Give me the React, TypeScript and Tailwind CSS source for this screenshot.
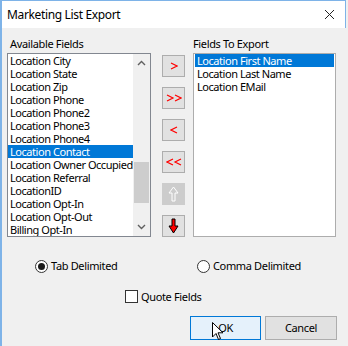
import React from "react";

const available = [
  "Location City",
  "Location State",
  "Location Zip",
  "Location Phone",
  "Location Phone2",
  "Location Phone3",
  "Location Phone4",
  "Location Contact",
  "Location Owner Occupied",
  "Location Referral",
  "LocationID",
  "Location Opt-In",
  "Location Opt-Out",
  "Billing Opt-In",
];

const exported = ["Location First Name", "Location Last Name", "Location EMail"];

function ListItem({ text, selected }: { text: string; selected?: boolean }) {
  return (
    <div
      className={
        "h-[13px] leading-[13px] pl-[2px] whitespace-nowrap tracking-[-0.45px] " +
        (selected ? "bg-[#0078d7] text-white" : "text-black")
      }
    >
      {text}
    </div>
  );
}

function MoveButton({
  children,
  disabled,
}: {
  children: React.ReactNode;
  disabled?: boolean;
}) {
  return (
    <div
      className={
        "w-[23px] h-[22px] border flex items-center justify-center " +
        (disabled
          ? "bg-[#cccccc] border-[#cccccc]"
          : "bg-[#e1e1e1] border-[#adadad]")
      }
    >
      {children}
    </div>
  );
}

function RedChevrons({ dir, count }: { dir: "r" | "l"; count: number }) {
  const one = (ox: number) =>
    dir === "r"
      ? `M${ox} 1 L${ox + 6} 4 L${ox} 7`
      : `M${ox + 6} 1 L${ox} 4 L${ox + 6} 7`;
  const w = count === 1 ? 8 : 16;
  return (
    <svg width={w} height="8" viewBox={`0 0 ${w} 8`}>
      <path d={one(1)} fill="none" stroke="#ff0000" strokeWidth="1.2" />
      {count === 2 && (
        <path d={one(9)} fill="none" stroke="#ff0000" strokeWidth="1.2" />
      )}
    </svg>
  );
}

function Radio({ label, checked }: { label: string; checked?: boolean }) {
  return (
    <div className="flex items-center gap-[3px]">
      <div className="w-[13px] h-[13px] rounded-full border border-[#333333] bg-white flex items-center justify-center">
        {checked && <div className="w-[7px] h-[7px] rounded-full bg-[#1a1a1a]" />}
      </div>
      <span>{label}</span>
    </div>
  );
}

export default function App() {
  return (
    <div
      className="relative w-[348px] h-[346px] bg-[#f0f0f0] text-[11px] tracking-[-0.35px] text-black overflow-hidden"
      style={{ fontFamily: '"Noto Sans", sans-serif' }}
    >
      <div className="w-[346px] h-full border-l-2 border-t border-[#7eb3e8] flex flex-col">
        {/* title bar */}
        <div className="h-[27px] bg-white border-r border-[#7eb3e8] flex items-center justify-between pl-[5px] pr-[10px]">
          <span className="text-[12px]">Marketing List Export</span>
          <svg width="11" height="11" viewBox="0 0 11 11">
            <path d="M1 1 L10 10 M10 1 L1 10" stroke="#222" strokeWidth="1" />
          </svg>
        </div>

        {/* lists */}
        <div className="flex pl-[5px] pt-[9px]">
          <div className="flex flex-col">
            <div className="pl-[3px] h-[16px] leading-[14px]">Available Fields</div>
            <div className="w-[144px] h-[184px] border border-[#828790] bg-white flex overflow-hidden">
              <div className="flex-1 overflow-hidden">
                {available.map((t) => (
                  <ListItem key={t} text={t} selected={t === "Location Contact"} />
                ))}
              </div>
              <div className="w-[17px] bg-[#f0f0f0] flex flex-col items-center">
                <svg className="mt-[6px]" width="9" height="6" viewBox="0 0 9 6">
                  <path d="M1 5 L4.5 1.5 L8 5" fill="none" stroke="#606060" strokeWidth="1.4" />
                </svg>
                <div className="mt-[96px] w-[15px] h-[41px] bg-[#cdcdcd]" />
                <svg className="mt-[21px]" width="9" height="6" viewBox="0 0 9 6">
                  <path d="M1 1 L4.5 4.5 L8 1" fill="none" stroke="#606060" strokeWidth="1.4" />
                </svg>
              </div>
            </div>
          </div>

          <div className="flex flex-col gap-[10px] ml-[11px] mt-[18px]">
            <MoveButton>
              <RedChevrons dir="r" count={1} />
            </MoveButton>
            <MoveButton>
              <RedChevrons dir="r" count={2} />
            </MoveButton>
            <MoveButton>
              <RedChevrons dir="l" count={1} />
            </MoveButton>
            <MoveButton>
              <RedChevrons dir="l" count={2} />
            </MoveButton>
            <MoveButton disabled>
              <svg width="11" height="16" viewBox="0 0 11 16">
                <path
                  d="M5.5 1 L10 7 L7 7 L7 15 L4 15 L4 7 L1 7 Z"
                  fill="#cccccc"
                  stroke="#ffffff"
                  strokeWidth="1"
                />
              </svg>
            </MoveButton>
            <MoveButton>
              <svg width="11" height="16" viewBox="0 0 11 16">
                <path
                  d="M4 1 L7 1 L7 8 L10 8 L5.5 15 L1 8 L4 8 Z"
                  fill="#ff0000"
                  stroke="#000000"
                  strokeWidth="1"
                />
              </svg>
            </MoveButton>
          </div>

          <div className="flex flex-col ml-[8px]">
            <div className="h-[16px] leading-[14px]">Fields To Export</div>
            <div className="w-[143px] h-[184px] border border-[#adadad] bg-white px-[1px]">
              {exported.map((t, i) => (
                <ListItem key={t} text={t} selected={i === 0} />
              ))}
            </div>
          </div>
        </div>

        {/* options */}
        <div className="flex pl-[33px] mt-[21px]">
          <div className="w-[162px]">
            <Radio label="Tab Delimited" checked />
          </div>
          <Radio label="Comma Delimited" />
        </div>

        <div className="flex items-center gap-[3px] pl-[123px] mt-[14px]">
          <div className="w-[13px] h-[13px] border border-[#333333] bg-white" />
          <span>Quote Fields</span>
        </div>

        <div className="flex justify-end gap-[4px] pr-[9px] mt-[11px]">
          <div className="w-[71px] h-[24px] border border-[#0078d7] bg-[#e5f1fb] flex items-center justify-center">
            OK
          </div>
          <div className="w-[72px] h-[24px] border border-[#adadad] bg-[#e1e1e1] flex items-center justify-center">
            Cancel
          </div>
        </div>
      </div>

      {/* mouse pointer */}
      <svg
        className="absolute left-[212px] top-[322px]"
        width="12"
        height="20"
        viewBox="0 0 12 20"
      >
        <path
          d="M0.5 0.5 L0.5 15 L4 11.5 L6.5 17.5 L8.5 16.5 L6 10.8 L11 10.8 Z"
          fill="#ffffff"
          stroke="#000000"
          strokeWidth="1"
        />
      </svg>
    </div>
  );
}
